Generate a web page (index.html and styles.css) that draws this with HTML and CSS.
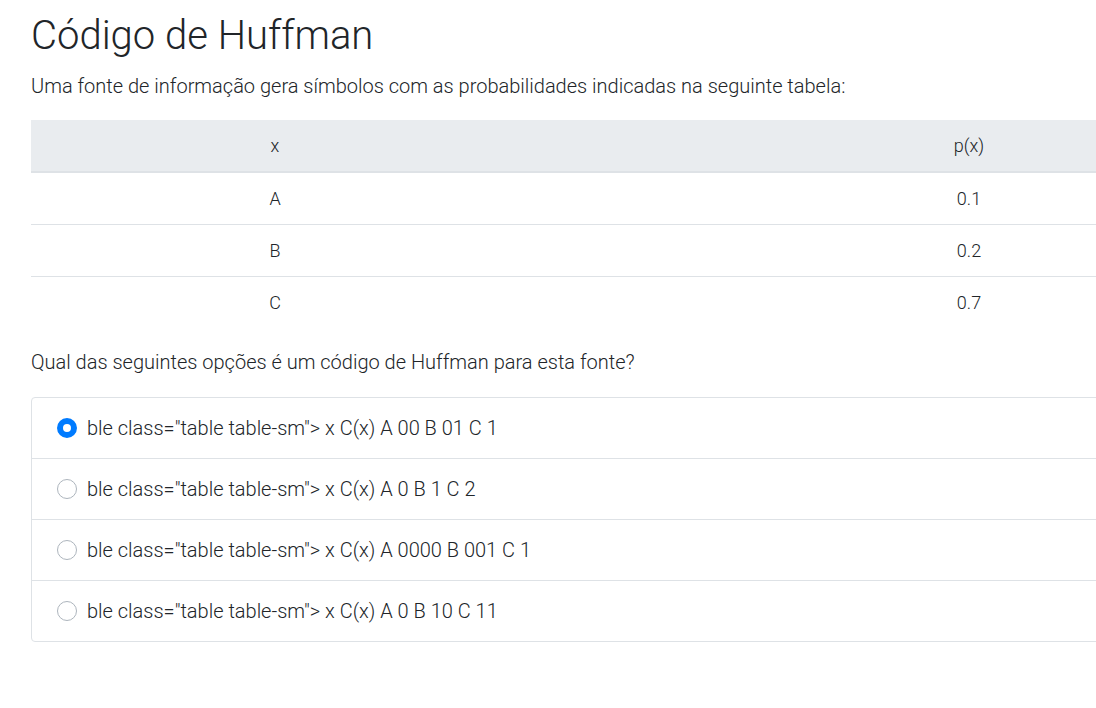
FILE: index.html
```html
<!DOCTYPE html>
<html lang="pt">
<head>
<meta charset="utf-8">
<title>Código de Huffman</title>
<link rel="stylesheet" href="styles.css">
</head>
<body>
<main class="page">
  <h1 class="title">Código de Huffman</h1>
  <p class="lead">Uma fonte de informação gera símbolos com as probabilidades indicadas na seguinte tabela:</p>
  <table class="prob-table">
    <thead>
      <tr><th class="col-x">x</th><th class="col-p">p(x)</th></tr>
    </thead>
    <tbody>
      <tr><td>A</td><td>0.1</td></tr>
      <tr><td>B</td><td>0.2</td></tr>
      <tr><td>C</td><td>0.7</td></tr>
    </tbody>
  </table>
  <p class="question">Qual das seguintes opções é um código de Huffman para esta fonte?</p>
  <ul class="options">
    <li class="option"><label><input type="radio" name="q" checked><span class="radio checked"></span><span>ble class="table table-sm"&gt; x C(x) A 00 B 01 C 1</span></label></li>
    <li class="option"><label><input type="radio" name="q"><span class="radio"></span><span>ble class="table table-sm"&gt; x C(x) A 0 B 1 C 2</span></label></li>
    <li class="option"><label><input type="radio" name="q"><span class="radio"></span><span>ble class="table table-sm"&gt; x C(x) A 0000 B 001 C 1</span></label></li>
    <li class="option"><label><input type="radio" name="q"><span class="radio"></span><span>ble class="table table-sm"&gt; x C(x) A 0 B 10 C 11</span></label></li>
  </ul>
</main>
</body>
</html>
```
FILE: styles.css
```css
html, body {
  margin: 0;
  padding: 0;
  background: #fff;
  overflow: hidden;
}
body {
  font-family: Roboto, "Liberation Sans", sans-serif;
  font-weight: 300;
  color: #212529;
}
.page {
  width: 1388px;
  padding: 0 0 0 31px;
}
.title {
  font-size: 40px;
  font-weight: 300;
  line-height: 1.2;
  margin: 12px 0 0 0;
}
.lead {
  font-size: 20px;
  line-height: 1.5;
  margin: 11px 0 19px 0;
}
.prob-table {
  width: 1388px;
  border-collapse: collapse;
  font-size: 18px;
}
.prob-table th, .prob-table td {
  text-align: center;
  height: 51px;
  padding: 0;
  font-weight: 300;
}
.prob-table th {
  height: 51px;
  background: #e9ecef;
  border-bottom: 2px solid #dee2e6;
}
.prob-table tbody tr + tr td {
  border-top: 1px solid #dee2e6;
}
.col-x { width: 488px; }
.question {
  font-size: 20px;
  line-height: 1.5;
  margin: 19px 0 20px 0;
}
.options {
  list-style: none;
  margin: 0;
  padding: 0;
  width: 1388px;
  border: 1px solid #dee2e6;
  border-radius: 4px;
}
.option {
  height: 60px;
  border-top: 1px solid #dee2e6;
  font-size: 20px;
}
.option:first-child { border-top: none; }
.option label {
  display: flex;
  align-items: center;
  gap: 10px;
  height: 100%;
  padding-left: 25px;
}
.option input { display: none; }
.radio {
  width: 20px;
  height: 20px;
  border-radius: 50%;
  border: 1px solid #adb5bd;
  box-sizing: border-box;
  background: #fff;
  flex: none;
}
.radio.checked {
  border: 6px solid #007bff;
  background: #fff;
}
```
